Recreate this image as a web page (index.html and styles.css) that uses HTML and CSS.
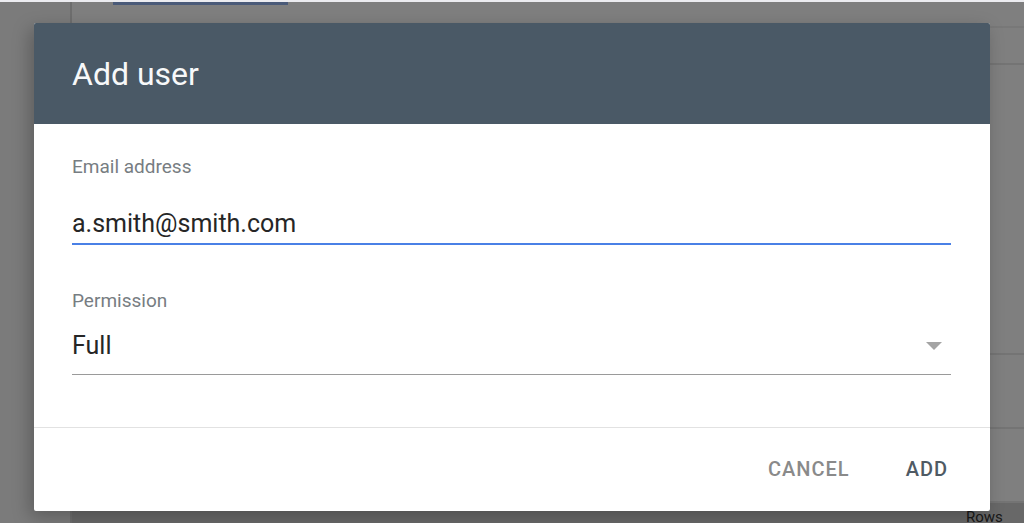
FILE: index.html
```html
<!DOCTYPE html>
<html lang="en">
<head>
  <meta charset="UTF-8" />
  <meta name="viewport" content="width=device-width, initial-scale=1.0"/>
  <title>Users | Add user</title>
  <link rel="stylesheet" href="styles.css">
</head>
<body>

  <div class="page">
    <div class="topline"></div>
    <div class="layout">
      <div class="sidebar"></div>
      <div class="main">
        <div class="tabs">
          <div class="tab active"></div>
        </div>
        <div class="table">
          <div class="row head"></div>
          <div class="row tall"></div>
          <div class="row"></div>
          <div class="row"></div>
        </div>
        <div class="pager">Rows</div>
      </div>
    </div>

    <div class="scrim"></div>

    <div class="dialog">
      <div class="dialog-header">
        <h1>Add user</h1>
      </div>

      <form class="dialog-body" id="addUserForm">
        <label for="email">Email address</label>
        <input class="field focused" type="email" id="email" name="email" value="a.smith@smith.com">

        <label for="permission" class="second">Permission</label>
        <div class="select">
          <span id="permission">Full</span>
          <span class="caret"></span>
        </div>
      </form>

      <div class="dialog-footer">
        <button type="button" class="btn cancel">Cancel</button>
        <button type="submit" form="addUserForm" class="btn primary">Add</button>
      </div>
    </div>
  </div>

</body>
</html>
```

FILE: styles.css
```css
* {
  box-sizing: border-box;
}

body {
  margin: 0;
  font-family: 'Roboto', 'Liberation Sans', sans-serif;
  overflow: hidden;
}

/* underlying page */
.page {
  position: relative;
  height: 523px;
  background: #fff;
  display: flex;
  flex-direction: column;
}

.topline {
  height: 2px;
  background: #ececf0;
  position: relative;
  z-index: 2;
}

.layout {
  flex: 1;
  display: flex;
  min-height: 0;
}

.sidebar {
  width: 72px;
  flex-shrink: 0;
  background: #f6f6f6;
  border-right: 2px solid #dcdcdc;
}

.main {
  flex: 1;
  min-width: 0;
  display: flex;
  flex-direction: column;
}

.tabs {
  height: 30px;
  padding-left: 41px;
  border-bottom: 2px solid #f0f0f0;
}

.tab.active {
  width: 175px;
  height: 3px;
  background: #95b4f0;
}

.table {
  flex: 1;
  display: flex;
  flex-direction: column;
}

.row {
  height: 74px;
  border-bottom: 2px solid #e8e8e8;
}

.row.head {
  height: 37px;
}

.row.tall {
  height: 290px;
}

.pager {
  height: 22px;
  background: #d0d0d0;
  padding-left: 894px;
  padding-top: 7px;
  font-size: 15px;
  line-height: 15px;
  color: #333;
  white-space: nowrap;
  overflow: hidden;
}

.scrim {
  position: absolute;
  top: 2px;
  left: 0;
  right: 0;
  bottom: 0;
  background: rgba(0, 0, 0, 0.5);
}

/* dialog */
.dialog {
  position: absolute;
  left: 34px;
  top: 23px;
  width: 956px;
  height: 488px;
  background: #fff;
  border-radius: 2px;
  box-shadow: -4px 6px 18px rgba(0, 0, 0, 0.25);
  display: flex;
  flex-direction: column;
  overflow: hidden;
}

.dialog-header {
  height: 101px;
  background: #4a5966;
  padding: 0 38px;
  display: flex;
  align-items: center;
}

.dialog-header h1 {
  margin: 0;
  font-size: 32px;
  font-weight: 400;
  color: #f7f8f9;
}

.dialog-body {
  padding: 32px 39px 52px 38px;
  display: flex;
  flex-direction: column;
  border-bottom: 1px solid #e2e2e2;
}

label {
  font-size: 19px;
  line-height: 21px;
  color: #777d82;
}

label.second {
  margin-top: 45px;
}

.field {
  margin-top: 31px;
  padding: 0 0 5px;
  border: none;
  border-bottom: 2px solid #4a80e6;
  font-family: inherit;
  font-size: 25px;
  line-height: 30px;
  height: 37px;
  color: #262626;
  outline: none;
}

.select {
  margin-top: 20px;
  padding-bottom: 13px;
  border-bottom: 1px solid #9a9a9a;
  display: flex;
  justify-content: space-between;
  align-items: center;
  font-size: 25px;
  line-height: 30px;
  color: #262626;
}

.caret {
  width: 0;
  height: 0;
  margin-right: 9px;
  border-left: 8px solid transparent;
  border-right: 8px solid transparent;
  border-top: 8px solid #a4a4a4;
}

.dialog-footer {
  flex: 1;
  display: flex;
  justify-content: flex-end;
  align-items: center;
  gap: 40px;
  padding: 0 34px 2px 0;
}

.btn {
  background: none;
  border: none;
  padding: 8px;
  font-family: inherit;
  font-size: 20px;
  font-weight: 500;
  letter-spacing: 1px;
  text-transform: uppercase;
  cursor: pointer;
}

.btn.cancel {
  color: #8a8a8a;
}

.btn.primary {
  color: #4f5a64;
}
```
